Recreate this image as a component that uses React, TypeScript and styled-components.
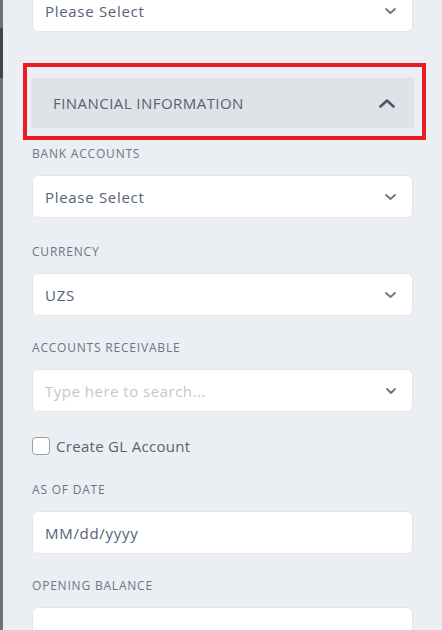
import styled, { createGlobalStyle } from "styled-components";

const GlobalStyle = createGlobalStyle`
    html, body {
        margin: 0;
        padding: 0;
        background: #ebeef3;
        font-family: "Open Sans", "Liberation Sans", sans-serif;
    }
    * { box-sizing: border-box; }
`;

const Page = styled.div`
    display: flex;
    width: 442px;
    height: 630px;
    overflow: hidden;
    position: relative;
`;

const EdgeStrip = styled.div`
    flex-shrink: 0;
    width: 3px;
    background: #707070;
    display: flex;
    flex-direction: column;
`;

const EdgeActive = styled.div`
    margin-top: 28px;
    height: 50px;
    background: #3d4650;
`;

const Content = styled.div`
    flex: 1;
    padding: 0 29px;
    display: flex;
    flex-direction: column;

    & > * {
        flex-shrink: 0;
    }
`;

const SelectBox = styled.div<{ $muted?: boolean }>`
    flex-shrink: 0;
    height: 43px;
    background: #ffffff;
    border: 1px solid #e2e6eb;
    border-radius: 6px;
    display: flex;
    align-items: center;
    justify-content: space-between;
    padding: 0 16px 0 12px;
    font-size: 15px;
    color: ${(p) => (p.$muted ? "#c3c7cd" : "#566376")};
    letter-spacing: ${(p) => (p.$muted ? 0.5 : 0.7)}px;
`;

const TopSelect = styled(SelectBox)`
    margin-top: -11px;
`;

const SectionHeader = styled.div`
    margin: 46px -1px 0 -1px;
    height: 50px;
    background: #dfe2e7;
    display: flex;
    align-items: center;
    justify-content: space-between;
    padding: 0 19px 0 22px;
    font-size: 15px;
    color: #556274;
    letter-spacing: 0.45px;
`;

const Highlight = styled.div`
    position: absolute;
    left: 23px;
    top: 63px;
    width: 403px;
    height: 77px;
    border: 4px solid #ec1c24;
    pointer-events: none;
`;

const Field = styled.div<{ $gap?: number }>`
    display: flex;
    flex-direction: column;
    margin-top: ${(p) => p.$gap ?? 24}px;
`;

const Label = styled.div`
    font-size: 12px;
    line-height: 18px;
    color: #6a7687;
    text-transform: uppercase;
    letter-spacing: 0.8px;
    margin-bottom: 12px;
`;

const CheckRow = styled.label`
    display: flex;
    align-items: center;
    gap: 6px;
    margin-top: 24px;
    font-size: 15px;
    color: #566376;
    letter-spacing: 0.3px;
`;

const CheckBox = styled.span`
    width: 18px;
    height: 18px;
    border: 1px solid #9b9ea3;
    border-radius: 4px;
    background: #ffffff;
`;

const Chevron = ({ up, small }: { up?: boolean; small?: boolean }) => {
    const w = up ? 16 : small ? 10 : 11;
    const h = up ? 9 : 6;
    return (
        <svg width={w} height={h} viewBox={`0 0 ${w} ${h}`} fill="none">
            <path
                d={up ? `M1.5 ${h - 1.5} L${w / 2} 1.5 L${w - 1.5} ${h - 1.5}` : `M1 1 L${w / 2} ${h - 1} L${w - 1} 1`}
                stroke={up ? "#4c5a6b" : "#6a7687"}
                strokeWidth={up ? 2.6 : 1.8}
                strokeLinecap="round"
                strokeLinejoin="round"
            />
        </svg>
    );
};

export default function App() {
    return (
        <Page>
            <GlobalStyle />
            <EdgeStrip>
                <EdgeActive />
            </EdgeStrip>
            <Content>
                <TopSelect>
                    <span>Please Select</span>
                    <Chevron />
                </TopSelect>
                <SectionHeader>
                    <span>FINANCIAL INFORMATION</span>
                    <Chevron up />
                </SectionHeader>
                <Field $gap={17}>
                    <Label>Bank Accounts</Label>
                    <SelectBox>
                        <span>Please Select</span>
                        <Chevron />
                    </SelectBox>
                </Field>
                <Field $gap={25}>
                    <Label>Currency</Label>
                    <SelectBox>
                        <span>UZS</span>
                        <Chevron />
                    </SelectBox>
                </Field>
                <Field $gap={23}>
                    <Label>Accounts Receivable</Label>
                    <SelectBox $muted>
                        <span>Type here to search...</span>
                        <Chevron small />
                    </SelectBox>
                </Field>
                <CheckRow>
                    <CheckBox />
                    <span>Create GL Account</span>
                </CheckRow>
                <Field $gap={25}>
                    <Label>As of Date</Label>
                    <SelectBox>
                        <span>MM/dd/yyyy</span>
                    </SelectBox>
                </Field>
                <Field $gap={23}>
                    <Label>Opening Balance</Label>
                    <SelectBox />
                </Field>
            </Content>
            <Highlight />
        </Page>
    );
}
